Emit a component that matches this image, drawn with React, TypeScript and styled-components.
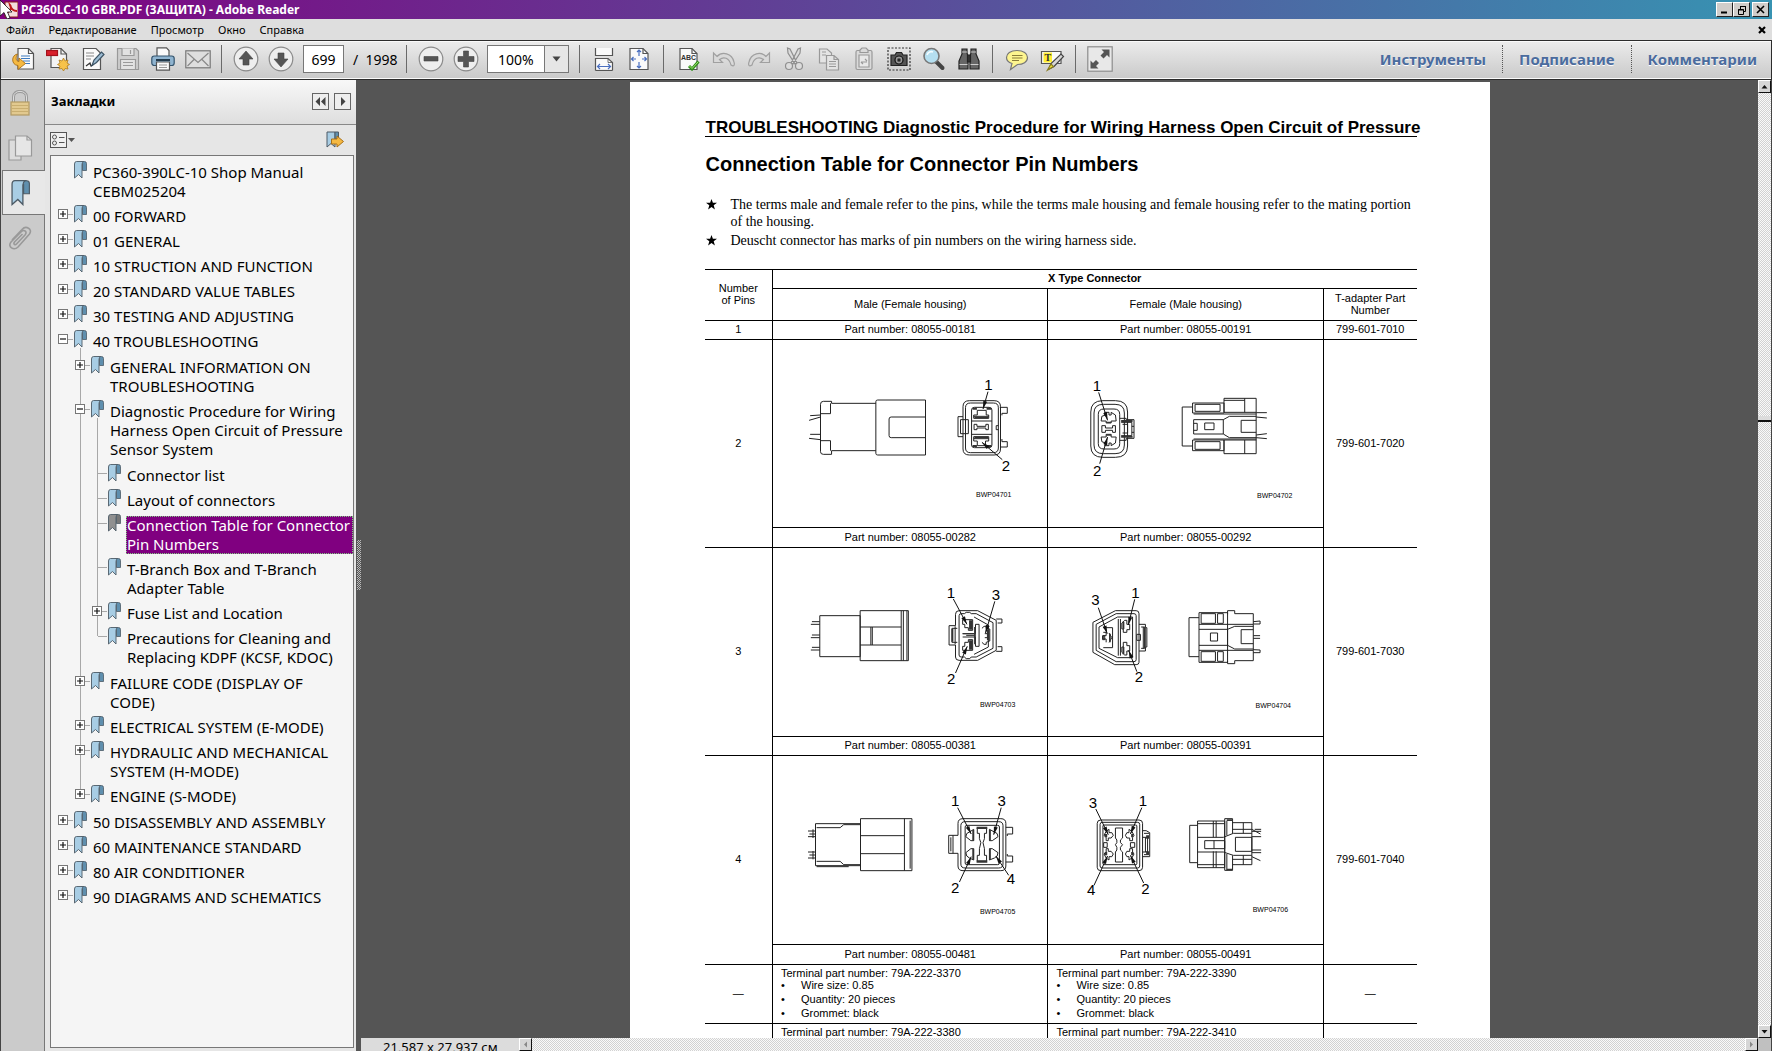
import React from "react";
import styled, { createGlobalStyle, css } from "styled-components";

const UI_FONT = '"Noto Sans", "DejaVu Sans", sans-serif';
const DOC_SANS = '"Liberation Sans", Arial, sans-serif';
const DOC_SERIF = '"Liberation Serif", "Times New Roman", serif';
const LINE = "#a8a8a8";
const checker = "repeating-conic-gradient(#fafafa 0 25%, #d2d2d2 0 50%) 0 0 / 2px 2px";

const GlobalStyle = createGlobalStyle`
  *, *::before, *::after { box-sizing: border-box; }
  body { margin: 0; font-family: ${UI_FONT}; color: #000; }
  button, input, select { font: inherit; color: inherit; margin: 0; padding: 0; }
  button { background: none; border: 0; }
  a { color: inherit; text-decoration: none; }
  ul { list-style: none; margin: 0; padding: 0; }
  svg { display: block; }
`;

const Window = styled.div`
  display: flex;
  flex-direction: column;
  height: 100vh;
  overflow: hidden;
  background: #dcdcdc;
`;

/* ---------- title bar and menu ---------- */

const TitleBar = styled.header`
  display: flex;
  align-items: center;
  gap: 3px;
  flex: none;
  height: 19px;
  padding-right: 3px;
  background: linear-gradient(90deg, #800080, #3793b2);
`;

const Title = styled.h1`
  flex: 1;
  margin: 0;
  color: #fff;
  font-size: 12px;
  line-height: 19px;
`;

const CaptionButtons = styled.div`
  display: flex;
`;

const CaptionButton = styled.button<{ $apart?: boolean }>`
  display: grid;
  place-items: center;
  width: 17px;
  height: 15px;
  margin-left: ${(p) => (p.$apart ? "2px" : "0")};
  background: #d0cdca;
  border: 1px solid;
  border-color: #fff #222 #222 #fff;
`;

const MenuBar = styled.nav`
  display: flex;
  align-items: center;
  flex: none;
  gap: 14px;
  height: 22px;
  padding: 0 6px;
  background: #dedede;
  border-bottom: 1px solid #2c2c2c;
  font-size: 11px;
  line-height: 20px;
`;

const MenuClose = styled.button`
  margin-left: auto;
`;

/* ---------- toolbar ---------- */

const Toolbar = styled.div`
  display: flex;
  align-items: center;
  flex: none;
  height: 39px;
  padding: 0 14px 2px 4px;
  background: linear-gradient(#ececec, #c9c9c9);
  border: solid #2c2c2c;
  border-width: 0 1px 1px;
  box-shadow: inset 0 1px 0 #fafafa, inset 0 -1px 0 #fafafa;
`;

const ToolButton = styled.button`
  display: grid;
  place-items: center;
  width: 35px;
  height: 30px;
`;

const Separator = styled.span<{ $wide?: boolean }>`
  width: 1px;
  height: 28px;
  margin: 0 ${(p) => (p.$wide ? 7 : 6)}px;
  background: #6a6a6a;
`;

const PageInput = styled.input`
  width: 41px;
  height: 28px;
  margin-left: 5px;
  border: 1px solid #777;
  background: #fff;
  font-size: 14px;
  text-align: center;
`;

const PageTotal = styled.span`
  width: 56px;
  padding-left: 9px;
  font-size: 14px;
  white-space: pre;
`;

const ZoomBox = styled.span`
  display: grid;
  grid-template-columns: 1fr 24px;
  width: 82px;
  height: 28px;
  margin: 0 4px;
  background: #fff;
  border: 1px solid #777;
`;

const ZoomSelect = styled.select`
  grid-area: 1 / 1 / 2 / 3;
  appearance: none;
  padding-left: 10px;
  background: transparent;
  border: 0;
  font-size: 14px;
`;

const ZoomArrow = styled.span`
  grid-area: 1 / 2;
  display: grid;
  place-items: center;
  background: #e6e6e6;
  border-left: 1px solid #777;
  pointer-events: none;
`;

const TaskTabs = styled.div`
  display: flex;
  align-items: center;
  margin-left: auto;
`;

const TaskTab = styled.button`
  height: 28px;
  padding: 0 16px;
  color: #4b6c9e;
  font-size: 15px;
  font-weight: 700;
  text-shadow: 0 1px 0 #fff;
  &:not(:first-child) { border-left: 1px dotted #555; }
  &:last-child { padding-right: 0; }
`;

/* ---------- work area ---------- */

const Work = styled.div`
  display: flex;
  flex: 1;
  min-height: 0;
`;

const Rail = styled.div`
  display: flex;
  flex-direction: column;
  flex: none;
  width: 45px;
  background: #cbcbcb;
  border-left: 1px solid #444;
`;

const RailButton = styled.button<{ $active?: boolean }>`
  display: grid;
  place-items: center;
  height: 45px;
  padding-right: 6px;
  border-right: 1px solid #777;
  ${(p) =>
    p.$active &&
    css`
      margin-left: 1px;
      padding-right: 9px;
      background: #e8e8e8;
      border: 1px solid #777;
      border-right: 0;
    `}
`;

const RailRest = styled.div`
  flex: 1;
  border-right: 1px solid #777;
`;

const SidePanel = styled.aside`
  display: flex;
  flex-direction: column;
  flex: none;
  width: 311px;
  background: #e6e6e6;
  padding-bottom: 3px;
`;

const PanelHeader = styled.div`
  display: flex;
  align-items: center;
  gap: 5px;
  height: 45px;
  padding: 0 5px 2px 6px;
  background: linear-gradient(#f8f8f8, #dedede);
  border-bottom: 1px solid #888;
`;

const PanelTitle = styled.h2`
  flex: 1;
  margin: 0;
  font-size: 13px;
`;

const SmallButton = styled.button`
  display: grid;
  place-items: center;
  width: 17px;
  height: 17px;
  border: 1px solid #666;
  background: #eee;
`;

const PanelOptions = styled.div`
  display: flex;
  justify-content: space-between;
  align-items: center;
  height: 30px;
  padding: 0 12px 0 5px;
`;

const TreeBox = styled.div`
  flex: 1;
  margin: 0 2px 0 5px;
  padding: 5px 0 0 7px;
  background: #f5f5f5;
  border: 1px solid #777;
`;

const Branch = styled.ul`
  padding: 1px 0 1px 17px;
  background: linear-gradient(${LINE}, ${LINE}) 22px 0 / 1px 4px no-repeat;
`;

const Node = styled.li<{ $line: "none" | "full" | "end" }>`
  background: ${(p) =>
    p.$line === "none"
      ? "none"
      : `linear-gradient(${LINE}, ${LINE}) 5px 0 / 1px ${p.$line === "full" ? "100%" : "9px"} no-repeat`};
`;

const NodeRow = styled.div`
  display: grid;
  grid-template-columns: 15px 14px 1fr;
`;

const ToggleCell = styled.span<{ $joined: boolean }>`
  padding-top: 4px;
  background: ${(p) => (p.$joined ? `linear-gradient(${LINE}, ${LINE}) 6px 9px / 9px 1px no-repeat` : "none")};
`;

const Toggle = styled.button`
  display: grid;
  place-items: center;
  width: 10px;
  height: 10px;
  background: #fff;
  border: 1px solid #777;
`;

const MarkCell = styled.span<{ $open: boolean }>`
  background: ${(p) => (p.$open ? `linear-gradient(${LINE}, ${LINE}) 7px 18px / 1px 100% no-repeat` : "none")};
`;

const LabelCell = styled.span`
  padding: 2px 0 4px 5px;
`;

const NodeLink = styled.a<{ $current?: boolean }>`
  display: block;
  padding: 0 0 0 1px;
  font-size: 15px;
  line-height: 19px;
  white-space: pre-line;
  ${(p) =>
    p.$current &&
    css`
      color: #fff;
      background: #800080;
      outline: 1px dotted #7fd07f;
      outline-offset: -1px;
    `}
`;

const Splitter = styled.div`
  display: grid;
  align-content: start;
  flex: none;
  width: 5px;
  padding: 460px 0 0 1px;
  background: #555;
`;

const Grip = styled.span`
  height: 50px;
  background: repeating-conic-gradient(#bbb 0 25%, #555 0 50%) 0 0 / 2px 2px;
`;

/* ---------- document ---------- */

const Viewer = styled.main`
  display: flex;
  flex-direction: column;
  flex: 1;
  min-width: 0;
`;

const Canvas = styled.div`
  display: flex;
  justify-content: center;
  flex: 1;
  min-height: 0;
  padding-top: 2px;
  overflow: hidden;
  background: #555;
`;

const Sheet = styled.article`
  width: 860px;
  padding: 37px 73px 0 75px;
  background: #fff;
  font-family: ${DOC_SANS};
`;

const RunningHead = styled.h2`
  margin: 0 0 15px;
  padding-left: 1px;
  border-bottom: 1px solid #000;
  font-size: 17px;
  line-height: 17px;
  white-space: nowrap;
`;

const SectionHead = styled.h3`
  margin: 0 0 20px;
  padding-left: 1px;
  font-size: 20px;
  line-height: 24px;
`;

const Notes = styled.ul`
  display: grid;
  gap: 2px;
  margin-bottom: 20px;
  font-family: ${DOC_SERIF};
  font-size: 14px;
  line-height: 17px;
`;

const Note = styled.li`
  display: grid;
  grid-template-columns: 25px 1fr;
  padding-left: 1px;
  svg { margin-top: 3px; }
`;

const PinTable = styled.table`
  width: 100%;
  table-layout: fixed;
  border-collapse: collapse;
  font-size: 11px;
  line-height: 12px;
  text-align: center;
`;

const Tr = styled.tr<{ $h: number }>`
  height: ${(p) => p.$h}px;
`;

const cell = css`
  padding: 0 0 2px;
  border: 1px solid #000;
  font-weight: 400;
  &:first-child[data-edge] { border-left: 0; }
  &:last-child[data-edge] { border-right: 0; }
`;

const Th = styled.th<{ $bold?: boolean }>`
  ${cell}
  && { font-weight: ${(p) => (p.$bold ? 700 : 400)}; }
`;

const Td = styled.td`
  ${cell}
`;

const TermCell = styled.td`
  ${cell}
  padding: 4px 0 0 8px;
  vertical-align: top;
  text-align: left;
`;

const TermTitle = styled.div`
  line-height: 9px;
`;

const TermItem = styled.li`
  line-height: 14px;
  &::before {
    content: "•";
    display: inline-block;
    width: 20px;
  }
`;

const StatusRow = styled.div`
  display: flex;
  flex: none;
  height: 13px;
  overflow: hidden;
  background: #dcdcdc;
`;

const PageSize = styled.span`
  flex: none;
  width: 158px;
  padding-left: 22px;
  font-size: 13px;
  line-height: 18px;
`;

const Track = styled.div`
  flex: 1;
  background: ${checker};
`;

const ScrollButton = styled.button`
  display: grid;
  place-items: center;
  flex: none;
  width: 13px;
  height: 13px;
  background: #d6d6d6;
  border: 1px solid;
  border-color: #fff #111 #111 #fff;
`;

const VScroll = styled.div`
  display: flex;
  flex-direction: column;
  flex: none;
  width: 14px;
  background: #dcdcdc;
  border-right: 1px solid #444;
`;

const TrackTop = styled(Track)`
  flex: 323;
`;

const Thumb = styled.div`
  height: 6px;
  background: #dcdcdc;
  border-bottom: 2px solid #111;
`;

const TrackBottom = styled(Track)`
  flex: 603;
`;

const Corner = styled.div`
  height: 13px;
  background: #c0c0c0;
`;

/* ---------- toolbar icons ---------- */

const Icon = ({ children, size = 24, w }: { children: React.ReactNode; size?: number; w?: number }) => (
  <svg width={w ?? size} height={size} viewBox={`0 0 ${w ?? size} ${size}`} fill="none" stroke="#555" strokeWidth="1.2" aria-hidden="true">
    {children}
  </svg>
);

const OpenIcon = () => (
  <Icon>
    <path d="M7 1.500H17.500L22.500 6.500V22H7Z" fill="#fafafa" />
    <path d="M17.500 1.500V6.500H22.500" />
    <path d="M10 9H19M10 11.500H19M12 14H19M12 16.500H19" stroke="#3f7cc0" />
    <path d="M6.500 7C0 8 0 18 7 18.500V22.500L14.500 16.500L8 11V14.500C4.500 14 4.500 10.500 6.500 7Z" fill="#f5b942" stroke="#a8711a" strokeWidth="0.900" />
  </Icon>
);
const CreatePdfIcon = () => (
  <Icon>
    <path d="M5 1.500H15L20.500 7V20.500H5Z" fill="#f4f4f4" />
    <path d="M15 1.500V7H20.500" />
    <rect x="0.500" y="3.500" width="11" height="5" fill="#d8202c" stroke="#a3121c" />
    <path d="M17.500 11L19 14L22 13L21 16L23.500 17.500L21 19L22 22L19 21.500L17.500 24L16 21.500L13 22L14 19L11.500 17.500L14 16L13 13L16 14Z" fill="#f7c24a" stroke="#b07c20" strokeWidth="0.800" />
  </Icon>
);
const EditIcon = () => (
  <Icon>
    <path d="M2.500 1.500H15L19.500 6V22.500H2.500Z" fill="#fafafa" />
    <path d="M5 6H13M5 9H13M5 12H10" stroke="#888" />
    <path d="M5 19L9 16L10 19L12 18" stroke="#333" />
    <path d="M11 18.500L13 13L20.500 5L23 7.500L15.500 15.500Z" fill="#9dbdd4" stroke="#3d5466" />
  </Icon>
);
const SaveIcon = () => (
  <Icon>
    <path d="M1.500 1.500H20L22.500 4V22.500H1.500Z" fill="#cfcfcf" stroke="#999" />
    <path d="M6 1.500V8.500H18V1.500M14.500 3V7M4.500 22V12.500H19.500V22M7 15.500H17M7 18.500H17" stroke="#999" fill="#e2e2e2" />
  </Icon>
);
const PrintIcon = () => (
  <Icon>
    <path d="M6 10V0.800H15.500L18 3.500V10" fill="#fafafa" />
    <rect x="0.800" y="9" width="22.400" height="9.500" rx="2.500" fill="#8fb4d0" stroke="#35556e" />
    <path d="M5 13H19" stroke="#223a4c" strokeWidth="2" />
    <path d="M5.500 15H18.500V23.200H5.500Z" fill="#fafafa" />
    <path d="M8 18H16M8 20.500H16" stroke="#999" />
  </Icon>
);
const MailIcon = () => (
  <Icon size={26}>
    <rect x="0.800" y="4.800" width="24.400" height="17" fill="#dedede" stroke="#777" />
    <path d="M2.500 7L13 16.500L23.500 7M2.500 20L9 13.500M23.500 20L17 13.500" stroke="#888" />
  </Icon>
);
const Disc = ({ d }: { d: string }) => (
  <Icon size={26}>
    <circle cx="13" cy="13" r="11.800" fill="#eeeeee" stroke="#8a8a8a" />
    <path d={d} fill="#555" stroke="#444" strokeWidth="0.600" />
  </Icon>
);
const UpIcon = () => <Disc d="M13 5L20 13H16V19H10V13H6Z" />;
const DownIcon = () => <Disc d="M13 21L6 13H10V7H16V13H20Z" />;
const MinusIcon = () => <Disc d="M6 10.500H20V15H6Z" />;
const PlusIcon = () => <Disc d="M10.500 5H15.500V10.500H21V15.500H15.500V21H10.500V15.500H5V10.500H10.500Z" />;
const FitWidthIcon = () => (
  <Icon>
    <path d="M3.500 1V8.500H20.500V1" fill="#fafafa" />
    <path d="M3.500 23.500V11.500H16L20.500 15.500V23.500" fill="#fafafa" />
    <path d="M16 11.500V15.500H20.500" strokeWidth="0.800" />
    <path d="M5.500 19.500H18.500M8 17L5.500 19.500L8 22M16 17L18.500 19.500L16 22" stroke="#4a6fc0" />
    <path d="M3.500 23.500H20.500" />
  </Icon>
);
const FitPageIcon = () => (
  <Icon>
    <path d="M3 1.500H16L21 6.500V22.500H3Z" fill="#fafafa" />
    <path d="M16 1.500V6.500H21" />
    <path d="M12 3V9M12 15V21M4.500 12H9M15 12H19.500M10 5L12 3L14 5M10 19L12 21L14 19M6.500 10L4.500 12L6.500 14M17.500 10L19.500 12L17.500 14" stroke="#4a6fc0" />
  </Icon>
);
const SpellIcon = () => (
  <Icon>
    <path d="M3 1.500H15L20 6.500V22.500H3Z" fill="#fafafa" />
    <path d="M15 1.500V6.500H20" />
    <text x="4" y="13" fontSize="7" fontWeight="700" fill="#333" stroke="none" fontFamily={DOC_SANS}>ABC</text>
    <path d="M12 19L15 22L21.500 14.500" stroke="#2f8f1c" strokeWidth="3" />
    <path d="M12.500 19L15 21.500L21 15" stroke="#a5e26f" strokeWidth="1" />
  </Icon>
);
const undoD = "M1.500 6V15.500H10.500L7.500 12.500C12 9 17 11 19 18C22 20 23 18 22 15C20 6 10 4 5 9.500Z";
const UndoIcon = () => (
  <Icon><path d={undoD} fill="#d9d9d9" stroke="#a0a0a0" /></Icon>
);
const RedoIcon = () => (
  <Icon><g transform="translate(24 0) scale(-1 1)"><path d={undoD} fill="#d9d9d9" stroke="#a0a0a0" /></g></Icon>
);
const CutIcon = () => (
  <Icon>
    <g stroke="#8f8f8f" fill="#dcdcdc">
      <path d="M5.500 1L8 2L15 16L13 17L6 6ZM18.500 1L16 2L9 16L11 17L18 6Z" />
      <circle cx="7" cy="19" r="3.500" /><circle cx="17" cy="19" r="3.500" />
    </g>
  </Icon>
);
const CopyIcon = () => (
  <Icon>
    <g stroke="#999" fill="#e4e4e4">
      <path d="M2.500 2H10L14.500 6V16H2.500ZM5 5H9M5 8H9" />
      <path d="M9.500 8.500H17L21.500 12.500V23H9.500ZM17 8.500V12.500H21.500M12 14.500H19M12 17H19M12 19.500H19" />
    </g>
  </Icon>
);
const PasteIcon = () => (
  <Icon>
    <g stroke="#999" fill="#dadada">
      <rect x="4" y="3.500" width="16" height="19" rx="1.500" />
      <path d="M8 5.500V3L10 1H14L16 3V5.500Z" />
      <path d="M7 8H17V20H7Z" fill="#e8e8e8" />
      <path d="M9 15H15M13 12L15 14M9 15L11 17" />
    </g>
  </Icon>
);
const CameraIcon = () => (
  <Icon>
    <rect x="1" y="1" width="22" height="22" stroke="#333" strokeDasharray="2 1.500" />
    <path d="M4 8H8L9.500 5.500H14.500L16 8H20V18.500H4Z" fill="#555" stroke="#222" />
    <circle cx="12" cy="13" r="4" fill="#999" stroke="#111" /><circle cx="12" cy="13" r="1.500" fill="#111" />
  </Icon>
);
const ZoomIcon = () => (
  <Icon>
    <path d="M14 14.500L20.500 21" stroke="#444" strokeWidth="4" strokeLinecap="round" />
    <circle cx="9.500" cy="9" r="7.500" fill="#b5dff0" stroke="#777" strokeWidth="1.600" />
    <path d="M5 8C6 5 9 4 11 5" stroke="#f4fcff" strokeWidth="1.600" />
  </Icon>
);
const FindIcon = () => (
  <Icon>
    <g fill="#666" stroke="#222">
      <path d="M5 2H10V6L11 9V22H2V14L5 7Z M14 2H19V7L22 14V22H13V9L14 6Z" />
      <path d="M10.500 8H13.500V15H10.500Z" fill="#333" />
      <path d="M2.500 17.500H10.500M13.500 17.500H21.500M5 5H10M14 5H19" stroke="#ccc" />
    </g>
  </Icon>
);
const CommentIcon = () => (
  <Icon>
    <path d="M12 3.500C18.500 3.500 22.500 6.500 22.500 10.500C22.500 15 18 17.500 12.500 17.500L5.500 22.500L7 16.500C3.500 15.500 1.500 13 1.500 10.500C1.500 6.500 5.500 3.500 12 3.500Z" fill="#fdf58f" stroke="#777" />
    <path d="M7 8.500H17.500M7 11H17.500M7 13.500H14" stroke="#8a7d3a" />
  </Icon>
);
const HighlightIcon = () => (
  <Icon size={26}>
    <path d="M2.500 5.500H22V17.500H2.500Z" fill="#fafafa" />
    <path d="M4.500 6.500H13V16.500H4.500Z" fill="#ffee33" stroke="none" />
    <text x="5.500" y="15" fontSize="10" fontWeight="700" fill="#333" stroke="none" fontFamily={DOC_SERIF}>T</text>
    <path d="M10 23L12 17.500L22 8L24.500 10.500L15 20.500Z" fill="#d8d8d8" stroke="#444" />
    <path d="M8.500 24L12 18L14.500 20.500Z" fill="#f5e63a" stroke="#887c20" />
  </Icon>
);
const ExpandIcon = () => (
  <Icon size={26}>
    <rect x="0.800" y="0.800" width="24.400" height="24.400" fill="#e8e8e8" stroke="#8c8c8c" />
    <path d="M22.500 3.500V11.500L20 9L16.500 12.500L13.500 9.500L17 6L14.500 3.500Z" fill="#555" stroke="none" />
    <path d="M3.500 22.500V14.500L6 17L9 14L12 17L9 20L11.500 22.500Z" fill="#555" stroke="none" />
  </Icon>
);

/* ---------- panel icons ---------- */

const LockIcon = () => (
  <Icon size={26}>
    <path d="M6.500 12V7C6.500 -0.500 19.500 -0.500 19.500 7V12" stroke="#999" strokeWidth="3" />
    <path d="M6.500 12V7C6.500 -0.500 19.500 -0.500 19.500 7V12" stroke="#ddd" strokeWidth="1" />
    <rect x="4" y="12" width="18" height="13" fill="#e2c98f" stroke="#b29a63" />
    <path d="M5 15.500H21M5 18.500H21M5 21.500H21" stroke="#c9ae70" />
  </Icon>
);
const PagesIcon = () => (
  <Icon size={26}>
    <path d="M2 5H14V25H2Z" fill="#ddd" stroke="#999" />
    <path d="M8.500 1H20L24.500 5V21H8.500Z" fill="#e6e6e6" stroke="#999" />
    <path d="M20 1V5H24.500" stroke="#999" />
  </Icon>
);
const BookmarkShape = ({ size, muted }: { size: "small" | "large"; muted?: boolean }) => (
  <svg width={size === "small" ? 14 : 22} height={size === "small" ? 18 : 26} viewBox="0 0 14 18" aria-hidden="true">
    <path d="M8 0.500H11.500Q13.500 0.500 13.500 2.500V9.500H9.500V3Z" fill={muted ? "#777" : "#5f8fae"} stroke="#4d5b66" strokeWidth="0.800" />
    <path d="M3.500 0.500H10.500Q9 1.500 9 3.500V17L5.500 13.500L1.500 17V3Q1.500 0.500 3.500 0.500Z" fill={muted ? "#909090" : "#a8cde4"} stroke="#4d5b66" strokeWidth="0.900" />
  </svg>
);
const ClipIcon = () => (
  <Icon size={26}>
    <path d="M5 15L15 4.500C19 0 26 4 22.500 9L11 22C7 26 0 22 4 17L14.500 6.500C17.500 4 20.500 7 18 10L9.500 19C8 20.500 6 19 7.500 17L15.500 9" stroke="#999" strokeWidth="1.600" />
  </Icon>
);
const NewMarkIcon = () => (
  <svg width="18" height="18" viewBox="0 0 18 18" aria-hidden="true">
    <path d="M1 1H9V16L5 12.500L1 16Z" fill="#a8cde4" stroke="#4d5b66" />
    <path d="M9 1H12.500V8H9Z" fill="#5f8fae" stroke="#4d5b66" />
    <path d="M5.500 8H11V5L17.500 10.500L11 16V13H5.500Z" fill="#f5b942" stroke="#a8711a" />
  </svg>
);
const OptionsIcon = () => (
  <svg width="25" height="16" viewBox="0 0 25 16" fill="none" stroke="#555" aria-hidden="true">
    <rect x="0.500" y="0.500" width="16" height="15" fill="#f0f0f0" />
    <circle cx="4.500" cy="5" r="2" /><circle cx="4.500" cy="11" r="2" />
    <path d="M9 5.500H14.500M9 10.500H14.500" />
    <path d="M18 6H25L21.500 10Z" fill="#555" stroke="none" />
  </svg>
);
const AppIcon = () => (
  <svg width="18" height="19" viewBox="0 0 18 19" aria-hidden="true">
    <rect x="5" y="2" width="13" height="15" fill="#f3dcdc" stroke="#8a1a1a" />
    <path d="M7 13C11 10 12 7 10 5C11 9 13 11 17 11" fill="none" stroke="#c01818" strokeWidth="2" />
    <path d="M0 0V16L4 12.500L7 19L10 18L7.500 12H12Z" fill="#fff" stroke="#111" strokeWidth="0.800" />
  </svg>
);
const Arrow = ({ d, color = "#111" }: { d: string; color?: string }) => (
  <svg width="7" height="7" viewBox="0 0 7 7" aria-hidden="true"><path d={d} fill={color} /></svg>
);
const DropArrow = () => (
  <svg width="9" height="6" viewBox="0 0 9 6" aria-hidden="true"><path d="M0.500 0.500H8.500L4.500 5.500Z" fill="#444" /></svg>
);
const UP = "M0.500 5.500H6.500L3.500 2Z";
const DOWN = "M0.500 2H6.500L3.500 5.500Z";
const LEFT = "M5 0.500V6.500L2 3.500Z";
const RIGHT = "M2 0.500V6.500L5 3.500Z";

/* ---------- connector drawings ---------- */

type Label = [string, number, number];
type Pointer = [number, number, number, number];
interface Drawing {
  code: Label;
  origin: [number, number];
  paths: string[];
  solid?: string;
  labels: Label[];
  pointers: Pointer[];
}

/* Drawing units per pixel, across and down. */
const UX = 2.8;
const UY = 3;

const FigureSvg = styled.svg`
  margin: auto;
  path, line { vector-effect: non-scaling-stroke; }
`;

const rr = (x1: number, y1: number, x2: number, y2: number, r: number) =>
  `M${x1 + r} ${y1}H${x2 - r}Q${x2} ${y1} ${x2} ${y1 + r}V${y2 - r}Q${x2} ${y2} ${x2 - r} ${y2}H${x1 + r}Q${x1} ${y2} ${x1} ${y2 - r}V${y1 + r}Q${x1} ${y1} ${x1 + r} ${y1}Z`;

const Figure = ({ drawing }: { drawing: Drawing }) => {
  const [ox, oy] = drawing.origin;
  const px = (x: number) => (x - ox) / UX;
  const py = (y: number) => (y - oy) / UY;
  return (
    <FigureSvg width="274" height="184" viewBox="0 0 274 184" role="img" aria-label={drawing.code[0]}>
      <g transform={`scale(${1 / UX} ${1 / UY}) translate(${-ox} ${-oy})`} fill="none" stroke="#222" strokeWidth="1">
        {drawing.paths.map((d) => <path key={d} d={d} />)}
        {drawing.solid && <path d={drawing.solid} fill="#333" stroke="none" />}
      </g>
      {drawing.pointers.map(([x1, y1, x2, y2]) => {
        const a = [px(x1), py(y1)];
        const b = [px(x2), py(y2)];
        const len = Math.hypot(b[0] - a[0], b[1] - a[1]);
        const u = [(b[0] - a[0]) / len, (b[1] - a[1]) / len];
        const base = [b[0] - u[0] * 8, b[1] - u[1] * 8];
        return (
          <g key={`${x1}-${y1}`}>
            <line x1={a[0]} y1={a[1]} x2={b[0]} y2={b[1]} stroke="#111" />
            <path d={`M${b[0]} ${b[1]}L${base[0] - u[1] * 2} ${base[1] + u[0] * 2}L${base[0] + u[1] * 2} ${base[1] - u[0] * 2}Z`} fill="#111" />
          </g>
        );
      })}
      {drawing.labels.map(([t, x, y]) => (
        <text key={t} x={px(x)} y={py(y)} fontSize="15" textAnchor="middle">{t}</text>
      ))}
      <text x={px(drawing.code[1])} y={py(drawing.code[2])} fontSize="7" textAnchor="middle">{drawing.code[0]}</text>
    </FigureSvg>
  );
};

const BWP04701: Drawing = {
  code: ["BWP04701", 627, 486],
  origin: [9, 18],
  paths: [
    "M297 205H173V199H150Q142 199 142 208V350Q142 358 150 358H173V347H297M142 236H170V205M142 317H170V347",
    "M302 195H436V360H302Q297 360 297 355V200Q297 195 302 195ZM436 246H340Q334 246 334 252V302Q334 308 340 308H436",
    "M113 242L142 240M110 256L142 246M113 298H142M110 310L142 314",
    rr(541, 197, 646, 360, 18), rr(548, 204, 640, 353, 14), rr(565, 217, 622, 338, 8),
    "M541 245H527V305H541M556 254H534V296H556Z",
    "M644 217H665V235H650V241M646 336H665V320H650V312M640 272H634V284H640",
    "M565 258H622M565 298H622",
    "M571 250V240H581V226H606V240H613V250ZM571 244H613",
    "M571 305V318H581V332H604V318H613V305ZM571 311H613",
    "M572 268H580V274H605V268H612V284H605V279H580V284H572Z",
  ],
  solid: "M568 218H580V224H568ZM607 218H620V224H607ZM568 330H580V336H568ZM607 330H620V336H607ZM573 246H612V250H573ZM573 305H612V309H573Z",
  labels: [["1", 612, 165], ["2", 661, 408]],
  pointers: [[611, 170, 597, 222], [651, 374, 594, 322]],
};

const BWP04702: Drawing = {
  code: ["BWP04702", 1412, 490],
  origin: [780, 18],
  paths: [
    rr(897, 197, 1000, 367, 34), rr(906, 208, 991, 356, 26), rr(918, 222, 978, 342, 16),
    "M926 258L928 244L938 240L936 232H948V240H954V232L966 240L968 258H954V264H940V258Z",
    "M926 306L928 320L938 324L936 332H948V324H954V332L966 324L968 306H954V298H940V306Z",
    "M928 272H938V279H958V272H966V292H958V286H938V292H928Z",
    "M978 250H996V254H1018V310H996V316H978M982 262H1012V302H982M986 268H1000V294H986M1012 274H1018M1012 292H1018",
    "M1182 216H1153V333H1182M1182 204H1270V234H1182ZM1189 208H1259V229H1189Z",
    "M1270 190H1360V232H1270ZM1328 190V232M1270 196H1328M1182 315H1270V347H1182ZM1189 320H1259V343H1189ZM1270 315H1360V356H1270ZM1328 315V356",
    "M1185 297V254H1268L1285 244H1360M1185 297H1268L1285 308H1360M1185 265H1195V286H1185M1360 232V315M1360 256H1318V292H1360M1268 254V297M1185 237H1360M1185 312H1360",
    "M1216 264H1242V284H1216Z",
    "M1360 233H1390M1360 246L1390 249M1360 300L1390 296M1360 308L1390 311",
  ],
  solid: "M982 255H1014V261H982ZM982 303H1014V308H982ZM940 260H954V264H940ZM940 298H954V302H940Z",
  labels: [["1", 914, 168], ["2", 915, 423]],
  pointers: [[919, 172, 944, 256], [922, 386, 944, 306]],
};

const BWP04703: Drawing = {
  code: ["BWP04703", 638, 469],
  origin: [9, -4],
  paths: [
    "M140 196H253V319H140ZM253 181H388V331H253ZM368 181V331M374 181V331M384 181V331M253 230H368M253 284H368M283 230V284M287 230V284",
    "M118 214H140M115 222H140M118 254H140M115 262H140M118 291H140M115 299H140",
    "M530 181H582L634 210V300L582 330H530Q520 330 520 320V284H502V226H520V192Q520 181 530 181Z",
    "M536 190H545L550 186H560L564 190H578L625 217V294L578 320H564L560 325H550L545 320H536Q530 320 530 314V196Q530 190 536 190Z",
    "M525 234H510V276H525M519 228V282M634 206H650V218H638M634 303H650V289H638",
    "M540 208H568V240H556V232H546V222H540ZM540 300H568V268H556V276H546V288H540Z",
    "M540 250H576V222H586V288H576V260H540M550 255H574",
    "M594 234L600 228H606V234L616 236V272L606 276V282H600L594 276M602 250H612V262H602",
    "M572 200L612 224V290L572 312",
  ],
  solid: "M558 210H567V238H558ZM558 270H567V298H558ZM608 238H615V270H608ZM572 230H577V282H572ZM540 248H574V252H540ZM509 236H514V274H509Z",
  labels: [["1", 507, 142], ["3", 633, 150], ["2", 508, 400]],
  pointers: [[514, 146, 552, 222], [630, 153, 604, 248], [520, 368, 553, 288]],
};

const BWP04704: Drawing = {
  code: ["BWP04704", 1408, 473],
  origin: [780, -4],
  paths: [
    "M966 181H1024Q1032 181 1032 190V336Q1032 343 1024 343H964L903 306V216Z",
    "M968 190H1018Q1024 190 1024 196V328Q1024 334 1018 334H968L912 300V222Z",
    "M972 200H1014V322H972L920 294V230ZM974 206V316M980 206V316",
    "M932 232H958V292H932M932 246H940V256H932V266H940V276M948 248L956 262L948 276M930 256H936V268H930Z",
    "M984 218L992 210H998V222H1006V238H998V246H988V236H984ZM984 306L992 314H998V302H1006V286H998V276H988V290H984Z",
    "M1032 222H1050V232H1054V290H1050V302H1032M1038 230H1048V294H1038M1026 252H1036V270H1026ZM1044 230V294",
    "M1200 202H1172V319H1200M1200 187H1280V336H1200ZM1200 222H1280M1200 300H1280M1206 190H1246V219H1206ZM1252 190H1268V219H1252ZM1206 304H1246V333H1206ZM1252 304H1268V333H1252Z",
    "M1280 192V181H1300V190H1352V222H1280M1280 332V340H1300V331H1352V300H1280M1352 222V300",
    "M1200 237H1280L1300 228H1352M1200 285H1280L1300 296H1352M1280 237V285M1352 238H1318V280H1352M1232 248H1252V272H1232Z",
    "M1352 214L1371 212V221H1352M1352 256H1371M1352 264H1371M1352 298L1371 299V307H1352",
  ],
  solid: "M1046 232H1051V292H1046ZM986 214H991V236H986ZM986 290H991V312H986ZM948 250H953V276H948Z",
  labels: [["3", 910, 164], ["1", 1022, 144], ["2", 1032, 396]],
  pointers: [[918, 172, 943, 250], [1020, 147, 1002, 224], [1026, 364, 1003, 300]],
};

const BWP04705: Drawing = {
  code: ["BWP04705", 637, 476],
  origin: [8, 5],
  paths: [
    "M253 205H127V331H253M130 217H196L206 208H253M130 318H196L206 328H253M130 334H220",
    "M253 190H397V346H253ZM376 190V346M392 196V340M253 241H376M253 295H376",
    "M106 227H127M110 236H127M106 244H127M106 290H127M110 299H127M106 308H127M120 222V248M120 287V312",
    "M540 190H646Q660 190 660 204V332Q660 346 646 346H540Q526 346 526 332V294H500V240H526V204Q526 190 540 190ZM512 240V294M506 246V288",
    rr(534, 199, 652, 338, 12), rr(546, 210, 642, 328, 5),
    "M660 216H679V236H664V242M660 320H679V302H664V296",
    "M580 218H606V234H600V250L596 262L600 280V300H606V318H580V300H586V280L590 262L586 250V234H580Z",
    "M570 222V256H562L548 244Q548 232 558 230ZM570 314V280H562L548 292Q548 304 558 308Z",
    "M614 222V256H622L638 244Q638 232 628 230ZM614 314V280H622L638 292Q638 304 628 308Z",
  ],
  solid: "M566 224H571V256H566ZM566 280H571V312H566ZM613 224H618V256H613ZM613 280H618V312H613ZM578 214H608V221H578ZM578 315H608V322H578Z",
  labels: [["1", 518, 152], ["3", 648, 152], ["2", 518, 412], ["4", 674, 387]],
  pointers: [[525, 157, 563, 236], [647, 157, 626, 238], [530, 380, 563, 304], [668, 360, 632, 302]],
};

const BWP04706: Drawing = {
  code: ["BWP04706", 1400, 469],
  origin: [780, 5],
  paths: [
    rr(915, 194, 1042, 346, 10), rr(923, 201, 1034, 338, 6), rr(931, 209, 1026, 328, 3),
    "M966 218H986V248L980 254V262L986 268L980 276V284L986 290V320H966V290L970 284V276L966 268L970 262V254L966 248Z",
    "M940 228L948 222V232H956L960 240L954 248H946V256H940V246L934 240ZM940 308L948 314V304H956L960 296L954 288H946V280H940V290L934 296Z",
    "M1012 228L1004 222V232H998L994 240L998 248H1006V256H1014V246L1018 240ZM1012 308L1004 314V304H998L994 296L998 288H1006V280H1014V290L1018 296Z",
    "M933 262H943V276H933ZM1008 262H1020V276H1008Z",
    "M1042 226H1052L1062 232V304H1042M1042 246H1056V290H1042M1046 234H1060M1046 298H1060M1050 246V290",
    "M1196 210H1174V322H1196M1196 197H1272V337H1196ZM1196 205H1272M1196 328H1272M1240 197V246M1248 197V246M1240 288V337M1248 288V337",
    "M1196 246H1268L1296 234H1348M1196 290H1268L1296 300H1348M1216 256H1272V280H1216ZM1242 256V280M1272 246V290M1302 246H1348V288H1302Z",
    "M1272 190H1294V234M1272 190V246M1278 196V240M1294 202H1348V328H1294M1294 300V345H1272V290M1278 296V345M1324 202V234M1324 300V328M1294 222H1348M1294 312H1348",
    "M1348 222L1372 236M1348 228H1374M1348 244H1374M1348 284H1374M1348 292H1374M1348 304L1372 316M1356 222H1374",
  ],
  solid: "M1052 240H1060V250H1052ZM1052 288H1060V298H1052ZM1278 192H1294V197H1278ZM1278 340H1294V345H1278ZM936 236H943V246H936ZM936 290H943V300H936ZM1010 236H1016V246H1010ZM1010 290H1016V300H1010Z",
  labels: [["3", 903, 158], ["1", 1043, 152], ["4", 898, 419], ["2", 1050, 416]],
  pointers: [[911, 161, 946, 238], [1040, 157, 1008, 236], [906, 390, 944, 302], [1045, 383, 1008, 300]],
};

/* ---------- bookmarks ---------- */

interface Mark {
  label: string;
  children?: Mark[];
  closed?: boolean;
  current?: boolean;
}

const closed = (label: string): Mark => ({ label, closed: true });

const MARKS: Mark[] = [
  { label: "PC360-390LC-10 Shop Manual CEBM025204" },
  closed("00 FORWARD"),
  closed("01 GENERAL"),
  closed("10 STRUCTION AND FUNCTION"),
  closed("20 STANDARD VALUE TABLES"),
  closed("30 TESTING AND ADJUSTING"),
  {
    label: "40 TROUBLESHOOTING",
    children: [
      closed("GENERAL INFORMATION ON TROUBLESHOOTING"),
      {
        label: "Diagnostic Procedure for Wiring Harness Open Circuit of Pressure Sensor System",
        children: [
          { label: "Connector list" },
          { label: "Layout of connectors" },
          { label: "Connection Table for Connector Pin Numbers", current: true },
          { label: "T-Branch Box and T-Branch Adapter Table" },
          closed("Fuse List and Location"),
          { label: "Precautions for Cleaning and Replacing KDPF (KCSF, KDOC)" },
        ],
      },
      closed("FAILURE CODE (DISPLAY OF\nCODE)"),
      closed("ELECTRICAL SYSTEM (E-MODE)"),
      closed("HYDRAULIC AND MECHANICAL SYSTEM (H-MODE)"),
      closed("ENGINE (S-MODE)"),
    ],
  },
  closed("50 DISASSEMBLY AND ASSEMBLY"),
  closed("60 MAINTENANCE STANDARD"),
  closed("80 AIR CONDITIONER"),
  closed("90 DIAGRAMS AND SCHEMATICS"),
];

const MarkNode = ({ mark, depth, last }: { mark: Mark; depth: number; last: boolean }) => {
  const hasToggle = Boolean(mark.closed || mark.children);
  return (
    <Node $line={depth === 0 ? "none" : last ? "end" : "full"}>
      <NodeRow>
        <ToggleCell $joined={hasToggle || depth > 0}>
          {hasToggle && (
            <Toggle aria-label={mark.closed ? "Expand" : "Collapse"}>
              <svg width="6" height="6" viewBox="0 0 6 6" aria-hidden="true">
                <path d={mark.closed ? "M0 3H6M3 0V6" : "M0 3H6"} stroke="#111" strokeWidth="1.200" />
              </svg>
            </Toggle>
          )}
        </ToggleCell>
        <MarkCell $open={Boolean(mark.children)}>
          <BookmarkShape size="small" muted={mark.current} />
        </MarkCell>
        <LabelCell>
          <NodeLink href="#" $current={mark.current}>{mark.label}</NodeLink>
        </LabelCell>
      </NodeRow>
      {mark.children && (
        <Branch>
          {mark.children.map((child, i) => (
            <MarkNode key={child.label} mark={child} depth={depth + 1} last={i === mark.children!.length - 1} />
          ))}
        </Branch>
      )}
    </Node>
  );
};

/* ---------- pin table data ---------- */

const GROUPS = [
  { pins: "2", heights: [188, 20], male: BWP04701, female: BWP04702, maleNo: "08055-00282", femaleNo: "08055-00292", adapter: "799-601-7020" },
  { pins: "3", heights: [189, 19], male: BWP04703, female: BWP04704, maleNo: "08055-00381", femaleNo: "08055-00391", adapter: "799-601-7030" },
  { pins: "4", heights: [189, 20], male: BWP04705, female: BWP04706, maleNo: "08055-00481", femaleNo: "08055-00491", adapter: "799-601-7040" },
];

const Terminal = ({ no }: { no: string }) => (
  <TermCell>
    <TermTitle>Terminal part number: {no}</TermTitle>
    <ul>
      <TermItem>Wire size: 0.85</TermItem>
      <TermItem>Quantity: 20 pieces</TermItem>
      <TermItem>Grommet: black</TermItem>
    </ul>
  </TermCell>
);

const Star = () => (
  <svg width="11" height="11" viewBox="0 0 11 11" aria-hidden="true">
    <path d="M5.500 0L6.900 3.800H11L7.700 6.300L8.900 10.500L5.500 8L2.100 10.500L3.300 6.300L0 3.800H4.100Z" />
  </svg>
);

const tool = (label: string, icon: React.ReactNode) => (
  <ToolButton key={label} aria-label={label}>{icon}</ToolButton>
);

export default function App() {
  return (
    <Window>
      <GlobalStyle />
      <TitleBar>
        <AppIcon />
        <Title>PC360LC-10 GBR.PDF (ЗАЩИТА) - Adobe Reader</Title>
        <CaptionButtons>
          <CaptionButton aria-label="Minimize">
            <svg width="9" height="9" aria-hidden="true"><path d="M1 7.500H7" stroke="#000" strokeWidth="2" /></svg>
          </CaptionButton>
          <CaptionButton aria-label="Restore">
            <svg width="10" height="10" fill="none" stroke="#000" aria-hidden="true"><path d="M3.500 4V1.500H8.500V6.500H7M3 1.500H9M1.500 4.500H6.500V9.500H1.500ZM1 5H7" /></svg>
          </CaptionButton>
          <CaptionButton aria-label="Close" $apart>
            <svg width="9" height="9" aria-hidden="true"><path d="M1 1L8 8M8 1L1 8" stroke="#000" strokeWidth="1.600" /></svg>
          </CaptionButton>
        </CaptionButtons>
      </TitleBar>

      <MenuBar>
        {["Файл", "Редактирование", "Просмотр", "Окно", "Справка"].map((m) => (
          <button key={m}>{m}</button>
        ))}
        <MenuClose aria-label="Close document">
          <svg width="8" height="8" aria-hidden="true"><path d="M1 1L7 7M7 1L1 7" stroke="#000" strokeWidth="2.200" /></svg>
        </MenuClose>
      </MenuBar>

      <Toolbar>
        {tool("Open", <OpenIcon />)}
        {tool("Create PDF", <CreatePdfIcon />)}
        {tool("Sign", <EditIcon />)}
        {tool("Save", <SaveIcon />)}
        {tool("Print", <PrintIcon />)}
        {tool("Mail", <MailIcon />)}
        <Separator />
        {tool("Previous page", <UpIcon />)}
        {tool("Next page", <DownIcon />)}
        <PageInput aria-label="Page" defaultValue="699" />
        <PageTotal>/  1998</PageTotal>
        <Separator />
        {tool("Zoom out", <MinusIcon />)}
        {tool("Zoom in", <PlusIcon />)}
        <ZoomBox>
          <ZoomSelect aria-label="Zoom" defaultValue="100%">
            <option>100%</option>
          </ZoomSelect>
          <ZoomArrow><DropArrow /></ZoomArrow>
        </ZoomBox>
        <Separator />
        {tool("Fit width", <FitWidthIcon />)}
        {tool("Fit page", <FitPageIcon />)}
        <Separator $wide />
        {tool("Spelling", <SpellIcon />)}
        {tool("Undo", <UndoIcon />)}
        {tool("Redo", <RedoIcon />)}
        {tool("Cut", <CutIcon />)}
        {tool("Copy", <CopyIcon />)}
        {tool("Paste", <PasteIcon />)}
        {tool("Snapshot", <CameraIcon />)}
        {tool("Magnify", <ZoomIcon />)}
        {tool("Find", <FindIcon />)}
        <Separator />
        {tool("Comment", <CommentIcon />)}
        {tool("Highlight", <HighlightIcon />)}
        <Separator />
        {tool("Read mode", <ExpandIcon />)}
        <TaskTabs>
          <TaskTab>Инструменты</TaskTab>
          <TaskTab>Подписание</TaskTab>
          <TaskTab>Комментарии</TaskTab>
        </TaskTabs>
      </Toolbar>

      <Work>
        <Rail>
          <RailButton aria-label="Security"><LockIcon /></RailButton>
          <RailButton aria-label="Pages"><PagesIcon /></RailButton>
          <RailButton aria-label="Bookmarks" $active><BookmarkShape size="large" /></RailButton>
          <RailButton aria-label="Attachments"><ClipIcon /></RailButton>
          <RailRest />
        </Rail>

        <SidePanel>
          <PanelHeader>
            <PanelTitle>Закладки</PanelTitle>
            <SmallButton aria-label="Collapse panel">
              <svg width="11" height="9" aria-hidden="true"><path d="M5 0V9L0.500 4.500ZM10.500 0V9L6 4.500Z" fill="#444" /></svg>
            </SmallButton>
            <SmallButton aria-label="Expand panel">
              <svg width="6" height="9" aria-hidden="true"><path d="M1 0V9L5.500 4.500Z" fill="#444" /></svg>
            </SmallButton>
          </PanelHeader>
          <PanelOptions>
            <button aria-label="Options"><OptionsIcon /></button>
            <button aria-label="Find bookmark"><NewMarkIcon /></button>
          </PanelOptions>
          <TreeBox>
            <ul>
              {MARKS.map((m) => <MarkNode key={m.label} mark={m} depth={0} last={false} />)}
            </ul>
          </TreeBox>
        </SidePanel>

        <Splitter><Grip /></Splitter>

        <Viewer>
          <Canvas>
            <Sheet>
              <RunningHead>TROUBLESHOOTING Diagnostic Procedure for Wiring Harness Open Circuit of Pressure</RunningHead>
              <SectionHead>Connection Table for Connector Pin Numbers</SectionHead>
              <Notes>
                <Note>
                  <Star />
                  <span>The terms male and female refer to the pins, while the terms male housing and female housing refer to the mating portion of the housing.</span>
                </Note>
                <Note>
                  <Star />
                  <span>Deuscht connector has marks of pin numbers on the wiring harness side.</span>
                </Note>
              </Notes>
              <PinTable>
                <colgroup>
                  <col style={{ width: 68 }} />
                  <col />
                  <col />
                  <col style={{ width: 93 }} />
                </colgroup>
                <thead>
                  <Tr $h={19}>
                    <Th data-edge rowSpan={2}>Number<br />of Pins</Th>
                    <Th data-edge colSpan={3} $bold>X Type Connector</Th>
                  </Tr>
                  <Tr $h={32}>
                    <Th>Male (Female housing)</Th>
                    <Th>Female (Male housing)</Th>
                    <Th data-edge>T-adapter Part<br />Number</Th>
                  </Tr>
                </thead>
                <tbody>
                  <Tr $h={19}>
                    <Td data-edge>1</Td>
                    <Td>Part number: 08055-00181</Td>
                    <Td>Part number: 08055-00191</Td>
                    <Td data-edge>799-601-7010</Td>
                  </Tr>
                  {GROUPS.map((g) => (
                    <React.Fragment key={g.pins}>
                      <Tr $h={g.heights[0]}>
                        <Td data-edge rowSpan={2}>{g.pins}</Td>
                        <Td><Figure drawing={g.male} /></Td>
                        <Td><Figure drawing={g.female} /></Td>
                        <Td data-edge rowSpan={2}>{g.adapter}</Td>
                      </Tr>
                      <Tr $h={g.heights[1]}>
                        <Td>Part number: {g.maleNo}</Td>
                        <Td>Part number: {g.femaleNo}</Td>
                      </Tr>
                    </React.Fragment>
                  ))}
                  <Tr $h={59}>
                    <Td data-edge>—</Td>
                    <Terminal no="79A-222-3370" />
                    <Terminal no="79A-222-3390" />
                    <Td data-edge>—</Td>
                  </Tr>
                  <Tr $h={59}>
                    <Td data-edge />
                    <TermCell><TermTitle>Terminal part number: 79A-222-3380</TermTitle></TermCell>
                    <TermCell><TermTitle>Terminal part number: 79A-222-3410</TermTitle></TermCell>
                    <Td data-edge />
                  </Tr>
                </tbody>
              </PinTable>
            </Sheet>
          </Canvas>
          <StatusRow>
            <PageSize>21,587 x 27,937 см</PageSize>
            <ScrollButton aria-label="Scroll left"><Arrow d={LEFT} color="#888" /></ScrollButton>
            <Track />
            <ScrollButton aria-label="Scroll right"><Arrow d={RIGHT} color="#888" /></ScrollButton>
          </StatusRow>
        </Viewer>

        <VScroll>
          <ScrollButton aria-label="Scroll up"><Arrow d={UP} /></ScrollButton>
          <TrackTop />
          <Thumb />
          <TrackBottom />
          <ScrollButton aria-label="Scroll down"><Arrow d={DOWN} /></ScrollButton>
          <Corner />
        </VScroll>
      </Work>
    </Window>
  );
}
